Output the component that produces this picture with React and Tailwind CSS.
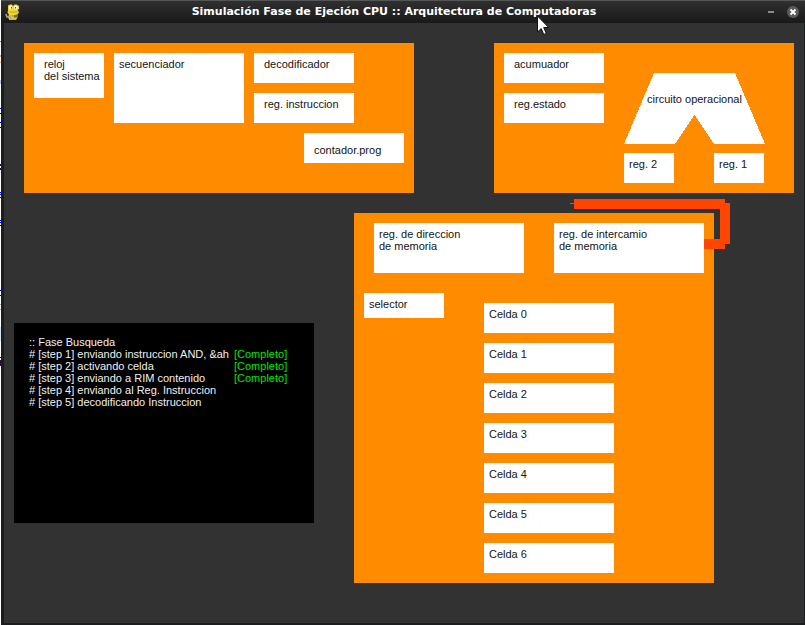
import React from 'react';

const cells = ['Celda 0', 'Celda 1', 'Celda 2', 'Celda 3', 'Celda 4', 'Celda 5', 'Celda 6'];

const steps = [
  { text: '# [step 1] enviando instruccion AND, &ah', done: true },
  { text: '# [step 2] activando celda', done: true },
  { text: '# [step 3] enviando a RIM contenido', done: true },
  { text: '# [step 4] enviando al Reg. Instruccion', done: false },
  { text: '# [step 5] decodificando Instruccion', done: false },
];

const edgeMarks = [
  { y: 41, h: 1, c: '#8a8a8a' },
  { y: 55, h: 2, c: '#e8b08a' },
  { y: 62, h: 1, c: '#e8b08a' },
  { y: 80, h: 4, c: '#b8c4e0' },
  { y: 108, h: 1, c: '#0000ee' },
  { y: 113, h: 1, c: '#0000ee' },
  { y: 122, h: 1, c: '#0000ee' },
  { y: 127, h: 1, c: '#0000ee' },
  { y: 164, h: 2, c: '#33103a' },
  { y: 168, h: 2, c: '#33103a' },
  { y: 192, h: 1, c: '#0000ee' },
  { y: 194, h: 1, c: '#0000ee' },
  { y: 197, h: 1, c: '#0000ee' },
  { y: 220, h: 1, c: '#0000ee' },
  { y: 222, h: 1, c: '#0000ee' },
  { y: 225, h: 1, c: '#0000ee' },
  { y: 290, h: 1, c: '#0000ee' },
  { y: 295, h: 1, c: '#0000ee' },
  { y: 304, h: 1, c: '#aaaaaa' },
  { y: 309, h: 1, c: '#aaaaaa' },
  { y: 327, h: 14, c: '#d5e3f0' },
  { y: 357, h: 1, c: '#33103a' },
  { y: 360, h: 6, c: '#33103a' },
];

function Box({ className = '', children }) {
  return <div className={`shrink-0 bg-white px-[5px] pt-[5px] ${className}`}>{children}</div>;
}

function SnakeIcon() {
  return (
    <svg width="16" height="17" viewBox="0 0 16 17" className="shrink-0" aria-hidden="true">
      <path d="M4 9.500h7l2 3-2 3.500H5l-2-2z" fill="#e3c91c" />
      <path d="M1 10l1 3h3l1 1.500M6 10.500l3 2 3-1" fill="none" stroke="#aaa6a8" strokeWidth="1.600" />
      <path d="M9 10.500h4v3H9z" fill="#7a6664" />
      <path d="M3 4V1.500L5 .500h2l1 1.500L9.500 .500h2L14 2v3l-1.500 1L14 8l-1 2-3 1H5L2.500 9 3 6.500z" fill="#efd922" />
      <path d="M4.500 8h8" stroke="#c9a713" />
      <ellipse cx="5.500" cy="3.500" rx="1.500" ry="2" fill="#f5f5ea" />
      <ellipse cx="10.800" cy="3.500" rx="1.900" ry="2" fill="#f5f5ea" />
      <path d="M6 3h1v1.500H6zM10 3h1v1.500h-1z" fill="#555" />
      <path d="M4 15.500h7" stroke="#d6b81a" />
    </svg>
  );
}

function TitleBar() {
  return (
    <header className="relative flex h-[23px] items-center justify-between border-t border-[#555756] bg-linear-to-b from-[#303030] to-[#191919] pr-[6px] pl-[4px]">
      <SnakeIcon />
      <h1 className="font-['DejaVu_Sans',sans-serif] text-[11px] leading-[14px] font-bold whitespace-nowrap text-white">
        Simulación Fase de Ejeción CPU :: Arquitectura de Computadoras
      </h1>
      <div className="flex items-center gap-[12px]">
        <button type="button" aria-label="Minimizar" className="flex h-3 w-[8px] items-center justify-center">
          <span className="h-[2px] w-[6px] bg-[#8c8c8c]" />
        </button>
        <button
          type="button"
          aria-label="Cerrar"
          className="flex h-3 w-3 items-center justify-center rounded-full bg-[#5c5c5c]"
        >
          <svg width="8" height="8" viewBox="0 0 8 8">
            <path d="M1.500 1.500l5 5M6.500 1.500l-5 5" stroke="#fff" strokeWidth="1.800" />
          </svg>
        </button>
      </div>
      <svg width="13" height="21" viewBox="0 0 13 21" className="absolute top-[14px] left-[535px] z-10" aria-hidden="true">
        <path d="M1.500 1v16l3.700-3.500 2.600 6 2.500-1.100-2.600-5.900h5z" fill="#fff" stroke="#111" />
      </svg>
    </header>
  );
}

function ControlUnit() {
  return (
    <section className="flex h-[150px] w-[390px] shrink-0 gap-[10px] bg-[#ff8c00] p-[10px]">
      <Box className="h-[45px] w-[70px] pl-[10px] whitespace-nowrap">
        reloj
        <br />
        del sistema
      </Box>
      <Box className="h-[70px] w-[130px]">secuenciador</Box>
      <div className="flex grow flex-col gap-[10px]">
        <Box className="h-[30px] w-[100px] pl-[10px]">decodificador</Box>
        <Box className="h-[30px] w-[100px] pl-[10px]">reg. instruccion</Box>
        <Box className="flex h-[30px] w-[100px] items-center self-end pb-[2px] pl-[10px]">contador.prog</Box>
      </div>
    </section>
  );
}

function ArithmeticUnit() {
  return (
    <section className="flex h-[150px] w-[300px] shrink-0 justify-between bg-[#ff8c00] p-[10px] pr-[29px]">
      <div className="flex flex-col gap-[10px]">
        <Box className="h-[30px] w-[100px] pl-[10px]">acumuador</Box>
        <Box className="h-[30px] w-[100px] pl-[10px]">reg.estado</Box>
      </div>
      <div className="flex w-[141px] flex-col pt-5">
        <div className="grid h-[71px]">
          <svg width="141" height="71" viewBox="0 0 141 71" shapeRendering="crispEdges" className="col-start-1 row-start-1" aria-hidden="true">
            <path d="M30 0h81l30 71H90L70.500 42 51 71H0z" fill="#fff" />
          </svg>
          <span className="col-start-1 row-start-1 pt-5 text-center whitespace-nowrap">circuito operacional</span>
        </div>
        <div className="flex justify-between pt-[9px] pr-px">
          <Box className="h-[30px] w-[50px]">reg. 2</Box>
          <Box className="h-[30px] w-[50px]">reg. 1</Box>
        </div>
      </div>
    </section>
  );
}

function Console() {
  return (
    <section className="mt-[110px] h-[200px] w-[300px] shrink-0 bg-black px-[15px] pt-[13px] text-[#f0f0f0]">
      <p>:: Fase Busqueda</p>
      <ol>
        {steps.map((s) => (
          <li key={s.text} className="flex whitespace-nowrap">
            <span className="w-[205px]">{s.text}</span>
            {s.done && <span className="text-[#00e600]">[Completo]</span>}
          </li>
        ))}
      </ol>
    </section>
  );
}

function Memory() {
  return (
    <section className="relative h-[370px] w-[360px] shrink-0 bg-[#ff8c00] p-[10px]">
      <div className="flex justify-between pl-[10px]">
        <Box className="h-[50px] w-[150px]">
          reg. de direccion
          <br />
          de memoria
        </Box>
        <Box className="h-[50px] w-[150px]">
          reg. de intercamio
          <br />
          de memoria
        </Box>
      </div>
      <div className="flex gap-[40px] pt-5">
        <Box className="h-[25px] w-[80px]">selector</Box>
        <ul className="flex flex-col gap-[10px] pt-[10px]">
          {cells.map((c) => (
            <li key={c}>
              <Box className="h-[30px] w-[130px]">{c}</Box>
            </li>
          ))}
        </ul>
      </div>
      <svg
        width="160"
        height="50"
        viewBox="0 0 160 50"
        shapeRendering="crispEdges"
        className="absolute -top-[14px] left-[216px]"
        aria-hidden="true"
      >
        <path d="M0 4h4v1H0zM4 0h151v10H4zM150 4h10v41h-10zM134 40h21v10h-21z" fill="#ff4500" />
      </svg>
    </section>
  );
}

export default function App() {
  return (
    <div className="flex min-h-screen bg-white">
      <svg width="1" height="400" className="shrink-0" aria-hidden="true">
        {edgeMarks.map((m) => (
          <rect key={m.y} x="0" y={m.y} width="1" height={m.h} fill={m.c} />
        ))}
      </svg>
      <div className="flex min-w-0 grow flex-col bg-[#1a1e1f]">
        <TitleBar />
        <main className="mr-px mb-[2px] ml-[3px] grow bg-[#323232] font-['Liberation_Sans',Arial,sans-serif] text-[11px] leading-[12px] text-[#141414]">
          <div className="flex justify-between pt-5 pr-[10px] pl-5">
            <ControlUnit />
            <ArithmeticUnit />
          </div>
          <div className="flex gap-[40px] pt-5 pl-[10px]">
            <Console />
            <Memory />
          </div>
        </main>
      </div>
    </div>
  );
}
